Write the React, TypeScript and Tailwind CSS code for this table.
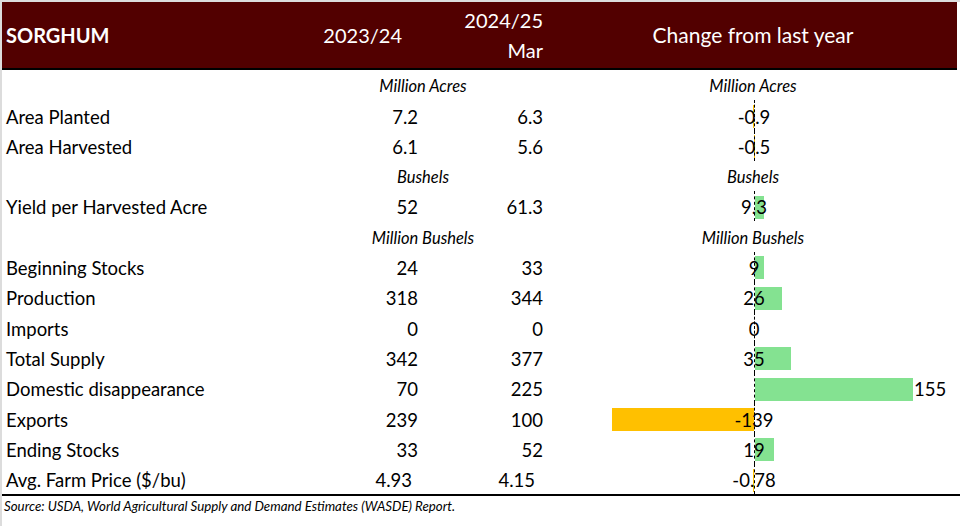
import React from 'react'

type Row =
  | { kind: 'unit'; text: string }
  | { kind: 'data'; label: string; a: string; b: string; c: string; v: number; outside?: boolean; last?: boolean }

const ROWS: Row[] = [
  { kind: 'unit', text: 'Million Acres' },
  { kind: 'data', label: 'Area Planted', a: '7.2', b: '6.3', c: '-0.9', v: -0.9 },
  { kind: 'data', label: 'Area Harvested', a: '6.1', b: '5.6', c: '-0.5', v: -0.5 },
  { kind: 'unit', text: 'Bushels' },
  { kind: 'data', label: 'Yield per Harvested Acre', a: '52', b: '61.3', c: '9.3', v: 9.3 },
  { kind: 'unit', text: 'Million Bushels' },
  { kind: 'data', label: 'Beginning Stocks', a: '24', b: '33', c: '9', v: 9 },
  { kind: 'data', label: 'Production', a: '318', b: '344', c: '26', v: 26 },
  { kind: 'data', label: 'Imports', a: '0', b: '0', c: '0', v: 0 },
  { kind: 'data', label: 'Total Supply', a: '342', b: '377', c: '35', v: 35 },
  { kind: 'data', label: 'Domestic disappearance', a: '70', b: '225', c: '155', v: 155, outside: true },
  { kind: 'data', label: 'Exports', a: '239', b: '100', c: '-139', v: -139 },
  { kind: 'data', label: 'Ending Stocks', a: '33', b: '52', c: '19', v: 19 },
  { kind: 'data', label: 'Avg. Farm Price ($/bu)', a: '4.93', b: '4.15', c: '-0.78', v: -0.78, last: true },
]

const SCALE = 1.02

function ChangeCell({ v, c, outside }: { v: number; c: string; outside?: boolean }) {
  const w = Math.abs(v) * SCALE
  return (
    <div className="relative flex h-full w-[414px]">
      <div className="flex w-[211px] items-center justify-end pt-[2px]">
        {v < 0 && <div className="h-[23px] bg-[#ffc000]" style={{ width: w }} />}
      </div>
      <div className="flex flex-1 items-center border-l border-dashed border-black pt-[2px]">
        {v > 0 && <div className="h-[23px] bg-[#84e291]" style={{ width: w }} />}
        {outside && <span className="ml-[1px] pt-[2px]">{c}</span>}
      </div>
      {!outside && (
        <span className="absolute left-[211px] top-0 flex h-full -translate-x-1/2 items-center pt-[4px]">{c}</span>
      )}
    </div>
  )
}

export default function App() {
  return (
    <div className="h-[526px] w-[960px] overflow-hidden border-l-2 border-t-2 border-[#dcdcdc] bg-white text-black font-['Lato',sans-serif]">
      <div className="flex h-[66px] w-[955px] items-center bg-[#520000] text-white">
        <div className="w-[298px] pl-[4px] text-[20px] font-bold">SORGHUM</div>
        <div className="w-[118px] pr-[16px] text-right text-[20px]">2023/24</div>
        <div className="w-[125px] text-right text-[20px] leading-[30px]">
          <div>2024/25</div>
          <div>Mar</div>
        </div>
        <div className="w-[414px] pl-[6px] text-center text-[21px]">Change from last year</div>
      </div>
      <div className="h-[2px] w-[955px] bg-black" />

      <div className="flex flex-col text-[18.5px]">
        {ROWS.map((r, i) =>
          r.kind === 'unit' ? (
            <div key={i} className="flex h-[30.3px] items-center pt-[3px] text-[16.5px] italic">
              <div className="w-[298px]" />
              <div className="w-[246px] text-center">{r.text}</div>
              <div className="w-[414px] text-center">{r.text}</div>
            </div>
          ) : (
            <div key={i} className="flex h-[30.3px] items-center">
              <div className="w-[298px] pl-[4px] pt-[4px]">{r.label}</div>
              <div className={`w-[118px] pt-[4px] text-right ${r.last ? 'pr-[6px]' : ''}`}>{r.a}</div>
              <div className={`w-[125px] pt-[4px] text-right ${r.last ? 'pr-[8px]' : ''}`}>{r.b}</div>
              <ChangeCell v={r.v} c={r.c} outside={r.outside} />
            </div>
          )
        )}
      </div>

      <div className="h-[2px] w-full bg-black" />
      <div className="flex h-[22px] items-center pl-[2px] text-[13.3px] italic">
        Source: USDA, World Agricultural Supply and Demand Estimates (WASDE) Report.
      </div>
    </div>
  )
}
